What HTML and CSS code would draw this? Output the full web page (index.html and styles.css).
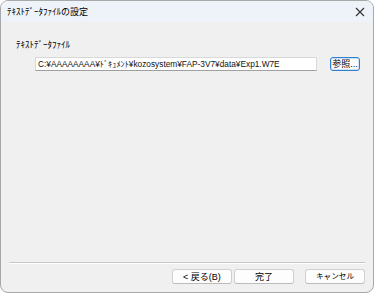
FILE: index.html
```html
<!DOCTYPE html>
<html lang="ja">
<head>
<meta charset="utf-8">
<link rel="stylesheet" href="styles.css">
</head>
<body>
<div class="window">
  <div class="titlebar">
    <span class="title">ﾃｷｽﾄﾃﾞｰﾀﾌｧｲﾙの設定</span>
    <svg class="close" width="10" height="10" viewBox="0 0 10 10"><path d="M1 1L9 9M9 1L1 9" stroke="#333" stroke-width="1.1"/></svg>
  </div>
  <div class="content">
    <div class="label">ﾃｷｽﾄﾃﾞｰﾀﾌｧｲﾙ</div>
    <div class="row">
      <div class="input">C:¥AAAAAAAA¥ﾄﾞｷｭﾒﾝﾄ¥kozosystem¥FAP-3V7¥data¥Exp1.W7E</div>
      <button class="btn browse">参照...</button>
    </div>
  </div>
  <div class="footer">
    <div class="sep"></div>
    <div class="buttons">
      <button class="btn wide">&lt; 戻る(B)</button>
      <button class="btn wide">完了</button>
      <button class="btn wide cancel">キャンセル</button>
    </div>
  </div>
</div>
</body>
</html>
```

FILE: styles.css
```css
html, body {
  margin: 0;
  padding: 0;
  background: #ffffff;
}
body {
  font-family: "Liberation Sans", "Noto Sans CJK JP", sans-serif;
  font-size: 9px;
  color: #000;
}
.window {
  box-sizing: border-box;
  width: 374px;
  height: 293px;
  border: 1px solid #a8a8a8;
  border-radius: 8px;
  background: #f0f0f0;
  overflow: hidden;
  display: flex;
  flex-direction: column;
}
.titlebar {
  height: 21px;
  background: #eef2f9;
  display: flex;
  align-items: center;
  justify-content: space-between;
  padding: 0 6px 0 6px;
  flex: none;
}
.title {
  font-size: 9px;
}
.close {
  margin-right: 2px;
}
.content {
  flex: 1;
  padding: 18px 0 0 15px;
}
.label {
  line-height: 10px;
}
.row {
  display: flex;
  align-items: center;
  margin-top: 7px;
  padding-left: 19px;
}
.input {
  box-sizing: border-box;
  width: 282px;
  height: 14px;
  background: #fff;
  border: 1px solid #d8d8d8;
  border-bottom-color: #a0a0a0;
  padding: 0 2px;
  font-size: 8.3px;
  line-height: 12px;
  white-space: nowrap;
  overflow: hidden;
  color: #111;
}
.btn {
  box-sizing: border-box;
  font-family: "Liberation Sans", "Noto Sans CJK JP", sans-serif;
  font-size: 9px;
  background: #fdfdfd;
  border: 1px solid #d0d0d0;
  border-bottom-color: #bcbcbc;
  border-radius: 3px;
  height: 15px;
  padding: 0;
  line-height: 12px;
  color: #000;
}
.browse {
  width: 30px;
  height: 14px;
  margin-left: 13px;
  border: 1px solid #2f7fd4;
  box-shadow: inset 0 0 0 1px #cfe2f7;
}
.footer {
  flex: none;
  padding: 0 8px 8px 8px;
}
.sep {
  height: 1px;
  background: #c8c8c8;
  border-bottom: 1px solid #ffffff;
}
.buttons {
  display: flex;
  justify-content: flex-end;
  margin-top: 5px;
  gap: 2px;
}
.wide {
  width: 60px;
}
.cancel {
  margin-left: 9px;
  font-size: 7.6px;
}
```
